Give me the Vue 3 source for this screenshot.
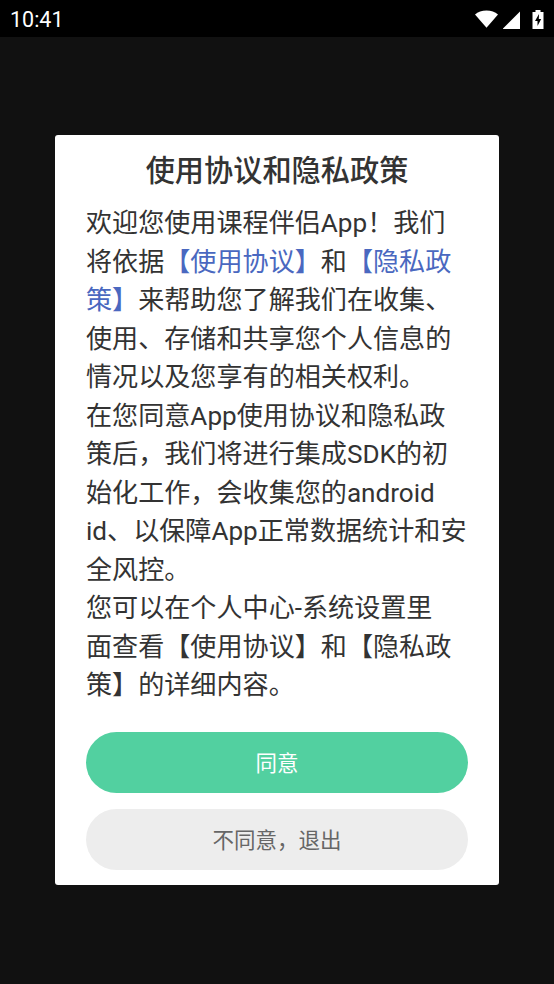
<script setup>
const time = '10:41'
</script>

<template>
  <div class="screen">
    <div class="status-bar">
      <span class="time">{{ time }}</span>
      <div class="status-icons">
        <svg class="wifi" width="24" height="18" viewBox="0 0 24 18">
          <path d="M1 4.500C4 2 7.800 0.500 12.500 0.500S21 2 24 4.500L12.500 17.800Z" fill="#fff" />
        </svg>
        <svg class="signal" width="18" height="18" viewBox="0 0 18 18">
          <path d="M18 0.500V18H1V17.500Z" fill="#fff" />
        </svg>
        <svg class="battery" width="12" height="19" viewBox="0 0 12 19">
          <path d="M3.500 0H8.500V2H11.500V19H0.500V2H3.500Z" fill="#fff" />
          <path d="M7 4L3 11H5.500V16L9.200 9H6.800Z" fill="#000" />
        </svg>
      </div>
    </div>

    <div class="content">
      <div class="dialog">
        <h1 class="title">使用协议和隐私政策</h1>
        <div class="body">
          <p>欢迎您使用课程伴侣App！我们将依据<a class="link">【使用协议】</a>和<a class="link">【隐私政策】</a>来帮助您了解我们在收集、使用、存储和共享您个人信息的情况以及您享有的相关权利。</p>
          <p>在您同意App使用协议和隐私政策后，我们将进行集成SDK的初始化工作，会收集您的android id、以保障App正常数据统计和安全风控。</p>
          <p>您可以在个人中心-系统设置里<br />面查看【使用协议】和【隐私政策】的详细内容。</p>
        </div>
        <div class="actions">
          <button class="btn btn-agree"><span>同意</span></button>
          <button class="btn btn-reject"><span>不同意，退出</span></button>
        </div>
      </div>
    </div>
  </div>
</template>

<style scoped>
.screen {
  width: 554px;
  height: 984px;
  display: flex;
  flex-direction: column;
  background: #111111;
  font-family: Roboto, "Noto Sans CJK SC", sans-serif;
  overflow: hidden;
}

.status-bar {
  height: 37px;
  flex: none;
  background: #000;
  display: flex;
  align-items: center;
  justify-content: space-between;
  padding: 0 10px;
}

.time {
  color: #fff;
  font-size: 21.500px;
  line-height: 37px;
  padding-top: 1px;
}

.status-icons {
  display: flex;
  align-items: center;
  margin-top: 1px;
}

.wifi {
  margin-right: 4px;
}

.signal {
  margin-right: 12px;
  margin-top: 1px;
}

.content {
  flex: 1;
  display: flex;
  justify-content: flex-start;
  padding: 98px 0 0 55.400px;
}

.dialog {
  width: 443.200px;
  height: 750px;
  box-sizing: border-box;
  background: #fff;
  border-radius: 3px;
  padding: 16px 30.600px 15px;
  display: flex;
  flex-direction: column;
}

.title {
  margin: 0;
  font-size: 29.200px;
  line-height: 40px;
  font-weight: 500;
  color: #333;
  text-align: center;
}

.body {
  margin-top: 13px;
  font-size: 26.100px;
  line-height: 38.500px;
  color: #333;
}

.body p {
  margin: 0;
}

.link {
  color: #4a68c0;
}

.actions {
  margin-top: auto;
  display: flex;
  flex-direction: column;
  gap: 16px;
}

.btn {
  height: 61px;
  border: none;
  border-radius: 31px;
  padding: 0 0 3px;
  font-family: inherit;
  font-size: 21.500px;
}

.btn-agree {
  background: #52d0a0;
  color: #fff;
}

.btn-reject {
  background: #ededed;
  color: #666;
}
</style>
